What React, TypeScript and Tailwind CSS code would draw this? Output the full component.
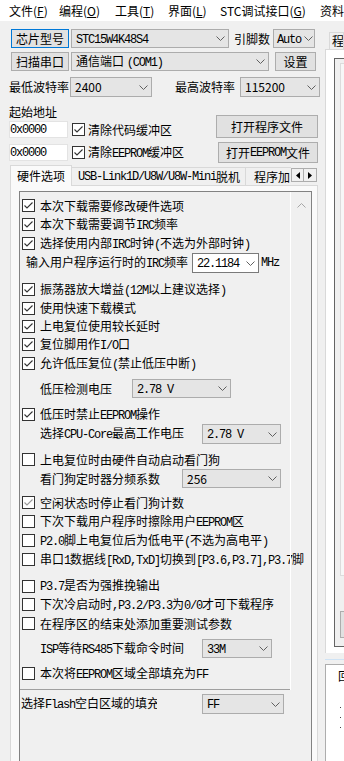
import React from "react";

const mono = "font-['Liberation_Mono',monospace] text-[12px] tracking-[-1.2px]";

function Mix({ text }: { text: string }) {
  const parts = text.split(/([\x21-\x7e][\x20-\x7e]*)/);
  return (
    <>
      {parts.map((s, i) =>
        /^[\x21-\x7e]/.test(s) ? (
          <span key={i} className={mono}>
            {s}
          </span>
        ) : (
          <React.Fragment key={i}>{s}</React.Fragment>
        )
      )}
    </>
  );
}

const Chevron = () => (
  <svg width="9" height="5" viewBox="0 0 9 5">
    <polyline points="0.5,0.5 4.5,4.5 8.5,0.5" fill="none" stroke="#606060" strokeWidth="1" />
  </svg>
);

function Combo({
  value,
  className,
  white,
  sans,
  narrow,
}: {
  value: string;
  className: string;
  white?: boolean;
  sans?: boolean;
  narrow?: boolean;
}) {
  return (
    <div
      className={`flex items-center h-full border whitespace-nowrap ${narrow ? "pl-[3px]" : "pl-[4px]"} ${
        white ? "bg-white border-[#7a7a7a]" : "bg-[#e5e5e5] border-[#acacac]"
      } ${className}`}
    >
      <span className="flex-1 min-w-0">{sans ? value : <Mix text={value} />}</span>
      <span className={`flex justify-center shrink-0 ${narrow ? "w-[12px]" : "w-[15px]"}`}>
        <Chevron />
      </span>
    </div>
  );
}

function Btn({ label, className, focus }: { label: string; className: string; focus?: boolean }) {
  return (
    <div
      className={`flex items-center justify-center border bg-[#e1e1e1] whitespace-nowrap ${
        focus ? "border-[#0078d7]" : "border-[#adadad]"
      } ${className}`}
    >
      <Mix text={label} />
    </div>
  );
}

function Box({ on, dim }: { on?: boolean; dim?: boolean }) {
  return (
    <span className="w-[13px] h-[13px] border border-[#333333] bg-white flex items-center justify-center shrink-0">
      {on && (
        <svg width="11" height="11" viewBox="0 0 11 11">
          <polyline points="1.5,5.5 4,8 9.5,2.5" fill="none" stroke={dim ? "#9a9a9a" : "#333333"} strokeWidth="1.1" />
        </svg>
      )}
    </span>
  );
}

function Check({ label, on, dim, className }: { label: string; on?: boolean; dim?: boolean; className: string }) {
  return (
    <div className={`flex items-center pl-[2px] whitespace-nowrap ${className}`}>
      <Box on={on} dim={dim} />
      <span className="ml-[5px]">
        <Mix text={label} />
      </span>
    </div>
  );
}

const Menu = ({ name, key1, className }: { name: string; key1: string; className: string }) => (
  <span className={`whitespace-nowrap ${className}`}>
    {name}(<span className="underline">{key1}</span>)
  </span>
);

export default function App() {
  return (
    <div className="w-[344px] h-[761px] overflow-hidden bg-[#f0f0f0] text-black text-[12px] leading-[14px] font-['Noto_Sans_CJK_SC',sans-serif] flex flex-col">
      {/* menu bar */}
      <div className="h-[21px] bg-white flex items-center pl-[9px] shrink-0 whitespace-nowrap overflow-hidden">
        <Menu name="文件" key1="F" className="w-[50px]" />
        <Menu name="编程" key1="O" className="w-[56px]" />
        <Menu name="工具" key1="T" className="w-[53px]" />
        <Menu name="界面" key1="L" className="w-[52px]" />
        <Menu name="STC调试接口" key1="G" className="w-[100px]" />
        <span>资料</span>
      </div>

      <div className="flex flex-1 min-h-0">
        {/* left column */}
        <div className="w-[325px] shrink-0 flex flex-col">
          <div className="mt-[8px] h-[19px] flex items-center pl-[11px]">
            <Btn label="芯片型号" focus className="w-[58px] h-full" />
            <Combo value="STC15W4K48S4" className="ml-[2px] w-[158px]" />
            <span className="ml-[5px] w-[39px]">引脚数</span>
            <Combo value="Auto" narrow className="w-[42px]" />
          </div>
          <div className="mt-[4px] h-[19px] flex items-center pl-[11px]">
            <Btn label="扫描串口" className="w-[58px] h-full" />
            <Combo value="通信端口 (COM1)" className="ml-[2px] w-[198px]" />
            <Btn label="设置" className="ml-[6px] w-[41px] h-full" />
          </div>
          <div className="mt-[6px] h-[20px] flex items-center pl-[9px]">
            <span className="w-[61px] whitespace-nowrap">最低波特率</span>
            <Combo value="2400" sans className="w-[82px]" />
            <span className="ml-[23px] w-[65px] whitespace-nowrap">最高波特率</span>
            <Combo value="115200" sans className="w-[80px]" />
          </div>

          <div className="mt-[8px] flex">
            <div className="flex flex-col pl-[9px]">
              <div className="h-[14px]">起始地址</div>
              <div className="mt-[2px] h-[17px] flex items-center">
                <div className="w-[59px] h-full bg-white border border-[#e3e3e3] flex items-center">
                  <span className={mono}>0x0000</span>
                </div>
                <span className="ml-[4px]">
                  <Box on />
                </span>
                <span className="ml-[3px] whitespace-nowrap">清除代码缓冲区</span>
              </div>
              <div className="mt-[6px] h-[17px] flex items-center">
                <div className="w-[59px] h-full bg-white border border-[#e3e3e3] flex items-center">
                  <span className={mono}>0x0000</span>
                </div>
                <span className="ml-[4px]">
                  <Box on />
                </span>
                <span className="ml-[3px] whitespace-nowrap">
                  <Mix text="清除EEPROM缓冲区" />
                </span>
              </div>
            </div>
            <div className="ml-auto mr-[7px] pt-[10px] flex flex-col items-end">
              <Btn label="打开程序文件" className="w-[102px] h-[23px]" />
              <Btn label="打开EEPROM文件" className="mt-[4px] w-[100px] h-[21px]" />
            </div>
          </div>

          {/* tabs */}
          <div className="mt-[2px] h-[20px] flex items-end pl-[10px] whitespace-nowrap">
            <div className="relative z-10 -mb-px h-[21px] w-[62px] border border-b-0 border-[#d9d9d9] bg-[#fafafa] flex items-center justify-center">
              硬件选项
            </div>
            <div className="h-[18px] w-[174px] border-t border-r border-[#d9d9d9] flex items-center pl-[6px]">
              <Mix text="USB-Link1D/U8W/U8W-Mini脱机" />
            </div>
            <div className="h-[18px] w-[45px] border-t border-[#d9d9d9] flex items-center pl-[8px] overflow-hidden">
              程序加
            </div>
            <div className="self-start mt-[3px] flex">
              <div className="w-[13px] h-[14px] border border-[#adadad] bg-[#f0f0f0] flex items-center justify-center">
                <svg width="4" height="7" viewBox="0 0 4 7">
                  <polygon points="4,0 0,3.5 4,7" fill="#000" />
                </svg>
              </div>
              <div className="w-[13px] h-[14px] border border-l-0 border-[#adadad] bg-[#f0f0f0] flex items-center justify-center">
                <svg width="4" height="7" viewBox="0 0 4 7">
                  <polygon points="0,0 4,3.5 0,7" fill="#000" />
                </svg>
              </div>
            </div>
          </div>

          {/* tab panel */}
          <div className="ml-[10px] w-[308px] flex-1 border border-b-0 border-[#d9d9d9] bg-[#fafafa] pt-[5px] pl-[8px]">
            <div className="w-[293px] h-full border border-b-0 border-[#828282] bg-[#f0f0f0]">
              <div className="flex h-[498px]">
                <div className="w-[270px] border-b border-[#a0a0a0] pt-[4px] flex flex-col">
                  <Check on label="本次下载需要修改硬件选项" className="h-[19px]" />
                  <Check on label="本次下载需要调节IRC频率" className="h-[19px]" />
                  <Check on label="选择使用内部IRC时钟(不选为外部时钟)" className="h-[19px]" />
                  <div className="h-[20px] flex items-center pl-[6px] whitespace-nowrap">
                    <span className="w-[166px]">
                      <Mix text="输入用户程序运行时的IRC频率" />
                    </span>
                    <Combo white value="22.1184" className="w-[67px]" />
                    <span className={`ml-[2px] ${mono}`}>MHz</span>
                  </div>
                  <Check on label="振荡器放大增益(12M以上建议选择)" className="mt-[7px] h-[19px]" />
                  <Check on label="使用快速下载模式" className="h-[18px]" />
                  <Check on label="上电复位使用较长延时" className="h-[18px]" />
                  <Check on label="复位脚用作I/O口" className="h-[19px]" />
                  <Check on label="允许低压复位(禁止低压中断)" className="h-[19px]" />
                  <div className="mt-[6px] h-[19px] flex items-center pl-[20px] whitespace-nowrap">
                    <span className="w-[92px]">低压检测电压</span>
                    <Combo value="2.78 V" className="w-[99px]" />
                  </div>
                  <Check on label="低压时禁止EEPROM操作" className="mt-[7px] h-[19px]" />
                  <div className="h-[20px] flex items-center pl-[20px] whitespace-nowrap">
                    <span className="w-[162px]">
                      <Mix text="选择CPU-Core最高工作电压" />
                    </span>
                    <Combo value="2.78 V" className="w-[79px]" />
                  </div>
                  <Check label="上电复位时由硬件自动启动看门狗" className="mt-[6px] h-[19px]" />
                  <div className="h-[19px] flex items-center pl-[20px] whitespace-nowrap">
                    <span className="w-[142px]">看门狗定时器分频系数</span>
                    <Combo value="256" sans className="w-[99px]" />
                  </div>
                  <Check on dim label="空闲状态时停止看门狗计数" className="mt-[5px] h-[19px]" />
                  <Check label="下次下载用户程序时擦除用户EEPROM区" className="h-[19px]" />
                  <Check label="P2.0脚上电复位后为低电平(不选为高电平)" className="h-[19px]" />
                  <Check label="串口1数据线[RxD,TxD]切换到[P3.6,P3.7],P3.7脚" className="h-[19px]" />
                  <Check label="P3.7是否为强推挽输出" className="mt-[8px] h-[18px]" />
                  <Check label="下次冷启动时,P3.2/P3.3为0/0才可下载程序" className="h-[19px]" />
                  <Check label="在程序区的结束处添加重要测试参数" className="h-[19px]" />
                  <div className="mt-[6px] h-[19px] flex items-center pl-[20px] whitespace-nowrap">
                    <span className="w-[162px]">
                      <Mix text="ISP等待RS485下载命令时间" />
                    </span>
                    <Combo value="33M" className="w-[70px]" />
                  </div>
                  <Check label="本次将EEPROM区域全部填充为FF" className="mt-[6px] h-[19px]" />
                </div>
                <div className="w-[21px] border-l border-white flex justify-center pt-[11px]">
                  <svg width="9" height="5" viewBox="0 0 9 5">
                    <polyline points="0.5,4.5 4.5,0.5 8.5,4.5" fill="none" stroke="#a6a6a6" strokeWidth="1" />
                  </svg>
                </div>
              </div>
              <div className="mt-[4px] h-[20px] flex items-center pl-[1px] whitespace-nowrap">
                <span className="w-[136px] overflow-hidden">
                  <Mix text="选择Flash空白区域的填充" />
                </span>
                <Combo value="FF" className="ml-[45px] w-[82px]" />
              </div>
            </div>
          </div>
        </div>

        {/* right column */}
        <div className="flex-1 min-w-0 flex flex-col">
          <div className="mt-[11px] ml-[4px] h-[17px] border border-b-0 border-[#d9d9d9] flex items-center pl-[2px] whitespace-nowrap overflow-hidden">
            程序文件
          </div>
          <div className="h-[604px] border-l border-t border-[#d9d9d9] bg-white pt-[8px] pl-[8px]">
            <div className="h-[589px] border-l border-t border-b border-[#646464] bg-[#f0f0f0] pt-[4px] pl-[5px]">
              <div className="h-[513px] border-l border-t border-b border-[#dcdcdc] bg-[#f7f7f7]" />
              <div className="mt-[35px] h-[27px] border-l border-t border-b border-[#adadad] bg-[#e1e1e1]" />
            </div>
          </div>
          <div className="mt-[6px] h-px bg-[#cfe3f5]" />
          <div className="mt-[4px] flex-1 border-l border-t border-[#adadad] bg-white pl-[12px] pt-[4px] whitespace-nowrap overflow-hidden">
            <div>回</div>
            <div className="mt-[24px] ml-[2px] flex flex-col gap-[9px]">
              <div className="w-[1px] h-[1px] bg-[#444]" />
              <div className="w-[1px] h-[1px] bg-[#444]" />
              <div className="w-[1px] h-[1px] bg-[#444]" />
            </div>
          </div>
        </div>
      </div>
    </div>
  );
}
